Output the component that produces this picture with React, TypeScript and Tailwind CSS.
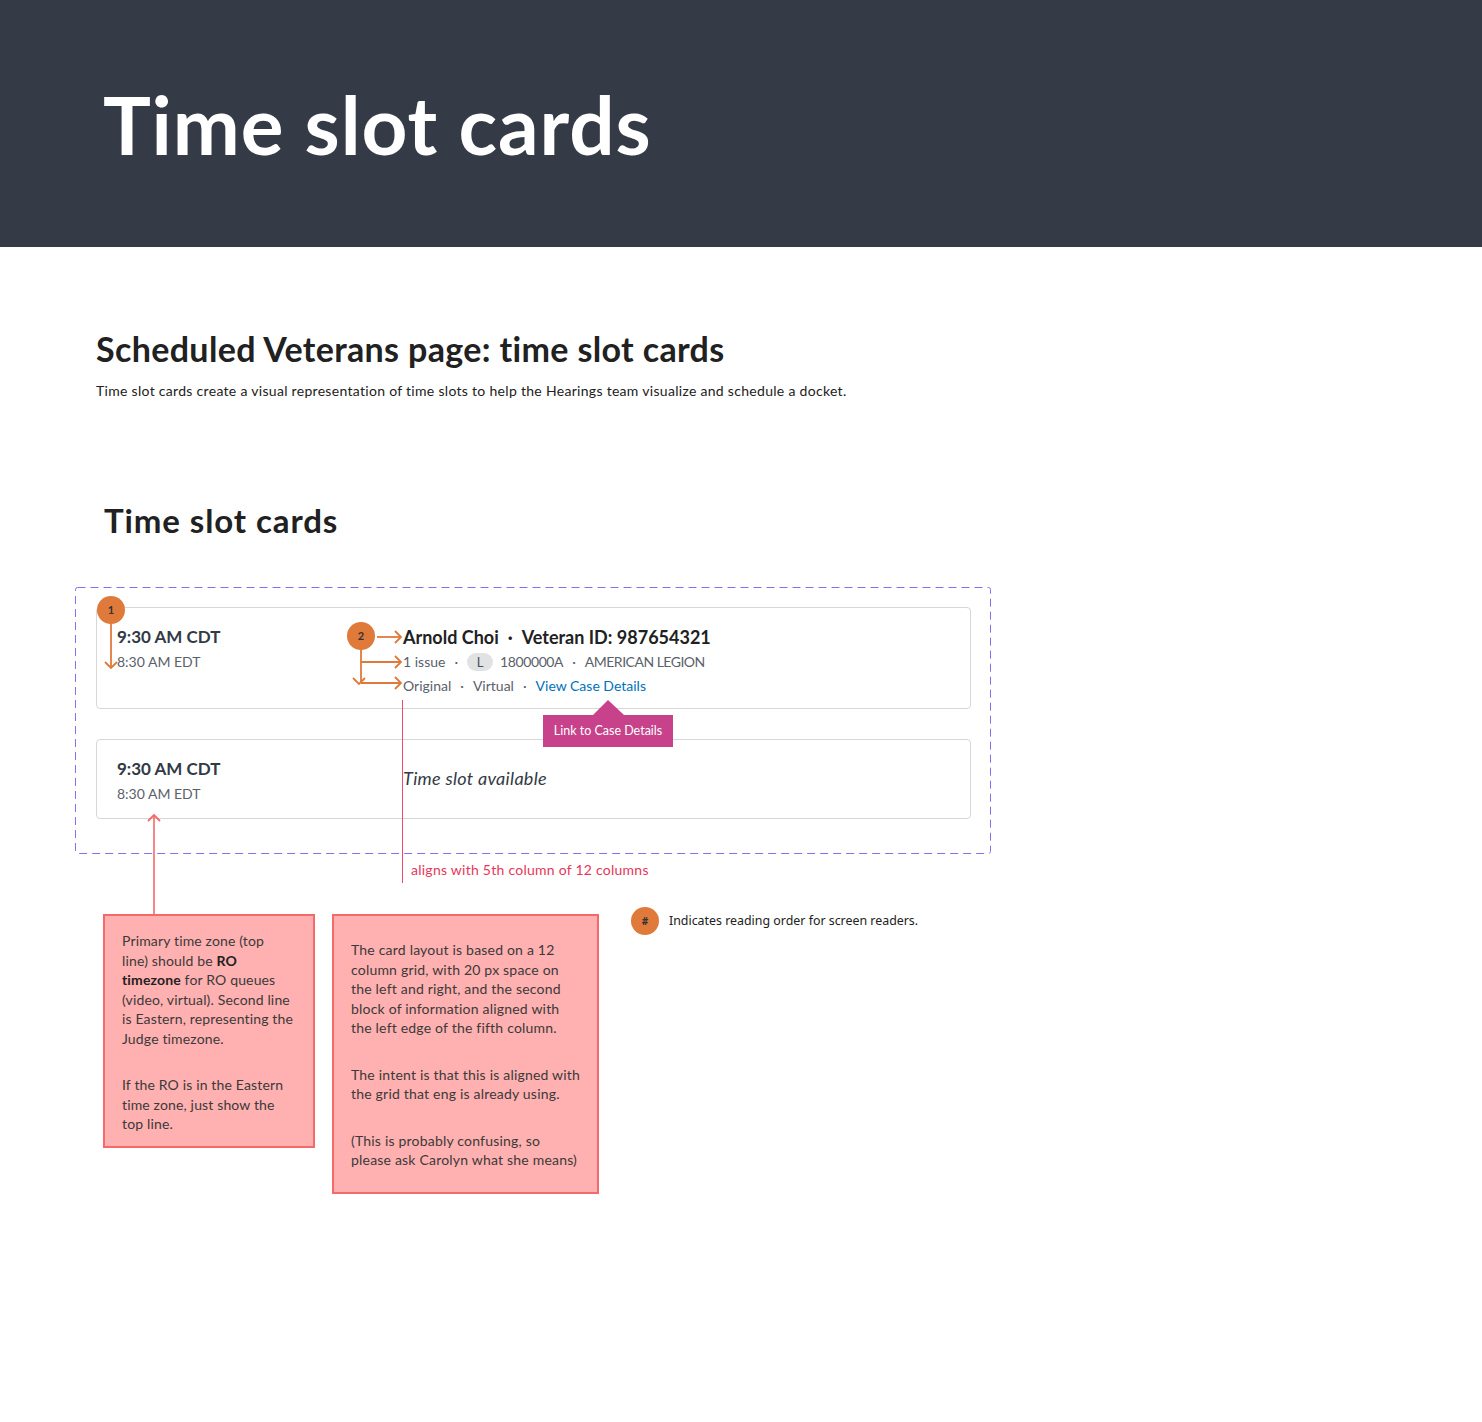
import React from "react";

const ORANGE = "#e07a3a";

function Dot() {
  return <span className="mx-[9px]">·</span>;
}

function Badge({ x, y, label }: { x: number; y: number; label: string }) {
  return (
    <g>
      <circle cx={x} cy={y} r={14} fill={ORANGE} />
      <text
        x={x}
        y={y + 4}
        textAnchor="middle"
        fontSize="11"
        fontWeight="700"
        fill="#333"
        fontFamily="Lato, sans-serif"
      >
        {label}
      </text>
    </g>
  );
}

function Head({ x, y, dir, color }: { x: number; y: number; dir: "right" | "down" | "up"; color: string }) {
  let pts = "";
  if (dir === "right") pts = `${x - 6},${y - 6} ${x},${y} ${x - 6},${y + 6}`;
  if (dir === "down") pts = `${x - 6},${y - 6} ${x},${y} ${x + 6},${y - 6}`;
  if (dir === "up") pts = `${x - 6},${y + 6} ${x},${y} ${x + 6},${y + 6}`;
  return <polyline points={pts} fill="none" stroke={color} strokeWidth={1.8} />;
}

function Overlay() {
  const o = ORANGE;
  const red = "#ef4b68";
  const pinkArrow = "#f46a6a";
  return (
    <svg className="absolute left-0 top-0 pointer-events-none" width={1482} height={1422}>
      {/* reading order 1 */}
      <line x1={111} y1={623} x2={111} y2={668} stroke={o} strokeWidth={1.8} />
      <Head x={111} y={668} dir="down" color={o} />
      <Badge x={111} y={610} label="1" />

      {/* reading order 2 */}
      <line x1={377} y1={637} x2={401} y2={637} stroke={o} strokeWidth={1.8} />
      <Head x={401} y={637} dir="right" color={o} />
      <line x1={361} y1={649} x2={361} y2={683} stroke={o} strokeWidth={1.8} />
      <line x1={361} y1={662} x2={401} y2={662} stroke={o} strokeWidth={1.8} />
      <Head x={401} y={662} dir="right" color={o} />
      <line x1={361} y1={683} x2={401} y2={683} stroke={o} strokeWidth={1.8} />
      <Head x={401} y={683} dir="right" color={o} />
      <Head x={359} y={684} dir="down" color={o} />
      <Badge x={361} y={636} label="2" />

      {/* column alignment line */}
      <line x1={402.5} y1={700} x2={402.5} y2={883} stroke={red} strokeWidth={1} />

      {/* timezone note arrow */}
      <line x1={154} y1={915} x2={154} y2={816} stroke={pinkArrow} strokeWidth={1.6} />
      <Head x={154} y={815} dir="up" color={pinkArrow} />

      {/* tooltip caret */}
      <polygon points="593,715 608,700 624,715" fill="#c7428a" />
    </svg>
  );
}

function TimeCol() {
  return (
    <div className="w-[286px] shrink-0">
      <div className="text-[17px] font-bold leading-[22px] text-[#323a45]">9:30 AM CDT</div>
      <div className="mt-[4px] text-[14px] leading-[20px] text-[#5b616b]">8:30 AM EDT</div>
    </div>
  );
}

export default function App() {
  return (
    <div
      className="relative min-h-[1422px] w-[1482px] bg-white text-[#212121]"
      style={{ fontFamily: "Lato, 'Noto Sans', sans-serif" }}
    >
      {/* Header */}
      <header className="flex h-[247px] items-center bg-[#343a46] pl-[103px]">
        <h1 className="text-[80px] font-bold leading-none tracking-[0.9px] text-white">Time slot cards</h1>
      </header>

      {/* Intro */}
      <section className="pl-[96px] pt-[82px]">
        <h2 className="text-[34px] font-bold leading-[40px] tracking-[0.35px] text-[#212121]">
          Scheduled Veterans page: time slot cards
        </h2>
        <p className="mt-[12px] text-[14px] leading-[20px] tracking-[0.3px] text-[#212121]">
          Time slot cards create a visual representation of time slots to help the Hearings team visualize and schedule a
          docket.
        </p>
      </section>

      <h3 className="pl-[104px] pt-[99px] text-[33px] font-bold leading-[40px] tracking-[0.9px] text-[#212121]">
        Time slot cards
      </h3>

      {/* Dashed frame with cards */}
      <div className="relative ml-[75px] mt-[47px] h-[267px] w-[916px] pl-[21px] pr-[20px] pt-[20px]">
        <svg className="absolute left-0 top-0 pointer-events-none" width="916" height="267">
          <rect
            x="0.5"
            y="0.5"
            width="915"
            height="266"
            fill="none"
            stroke="#8a6ef2"
            strokeWidth="1"
            strokeDasharray="8 5"
            rx="2"
          />
        </svg>

        <div className="flex h-[102px] rounded-[4px] border border-[#d6d7d9] bg-white pl-[20px] pt-[18px]">
          <TimeCol />
          <div>
            <div className="text-[18px] font-bold leading-[22px] text-[#212121]">
              Arnold Choi<Dot />Veteran ID: 987654321
            </div>
            <div className="mt-[4px] flex items-center text-[14px] leading-[20px] text-[#5b616b]">
              <span>1 issue</span>
              <Dot />
              <span className="mr-[7px] inline-flex h-[18px] w-[26px] items-center justify-center rounded-full bg-[#e1e2e3] text-[13px] text-[#4a4f57]">
                L
              </span>
              <span className="tracking-[-0.4px]">1800000A</span>
              <Dot />
              <span className="tracking-[-0.5px]">AMERICAN LEGION</span>
            </div>
            <div className="mt-[4px] flex items-center text-[14px] leading-[20px] text-[#5b616b]">
              <span>Original</span>
              <Dot />
              <span>Virtual</span>
              <Dot />
              <span className="text-[#0071bb]">View Case Details</span>
            </div>
          </div>
        </div>

        <div className="mt-[30px] flex h-[80px] items-center rounded-[4px] border border-[#d6d7d9] bg-white pl-[20px] pt-[4px]">
          <TimeCol />
          <div className="-mt-[6px] text-[18px] italic leading-[22px] tracking-[0.3px] text-[#323a45]">
            Time slot available
          </div>
        </div>
      </div>

      <div className="h-[60px] pl-[411px] pt-[6px] text-[14px] leading-[20px] tracking-[0.25px] text-[#e8365a]">
        aligns with 5th column of 12 columns
      </div>

      {/* Notes */}
      <div className="flex items-start pl-[103px]">
        <div className="w-[212px] border-2 border-[#f46a6a] bg-[#ffb0b0] px-[17px] pb-[12px] pt-[15px] text-[14px] leading-[19.5px] tracking-[0.15px] whitespace-nowrap text-[#3a3a3a]">
          <p>
            Primary time zone (top
            <br />
            line) should be <b className="text-[#212121]">RO</b>
            <br />
            <b className="text-[#212121]">timezone</b> for RO queues
            <br />
            (video, virtual). Second line
            <br />
            is Eastern, representing the
            <br />
            Judge timezone.
          </p>
          <p className="mt-[27px]">
            If the RO is in the Eastern
            <br />
            time zone, just show the
            <br />
            top line.
          </p>
        </div>

        <div className="ml-[17px] w-[267px] border-2 border-[#f46a6a] bg-[#ffb0b0] pb-[22px] pl-[17px] pr-[10px] pt-[24px] text-[14px] leading-[19.5px] tracking-[0.2px] whitespace-nowrap text-[#3a3a3a]">
          <p>
            The card layout is based on a 12
            <br />
            column grid, with 20 px space on
            <br />
            the left and right, and the second
            <br />
            block of information aligned with
            <br />
            the left edge of the fifth column.
          </p>
          <p className="mt-[27px]">
            The intent is that this is aligned with
            <br />
            the grid that eng is already using.
          </p>
          <p className="mt-[27px]">
            (This is probably confusing, so
            <br />
            please ask Carolyn what she means)
          </p>
        </div>

        <div className="ml-[32px] mt-[-7px] flex items-center gap-[10px]">
          <span
            className="flex h-[28px] w-[28px] items-center justify-center rounded-full bg-[#e07a3a] text-[10px] font-bold text-[#333]"
            style={{ fontFamily: "'Noto Sans', sans-serif" }}
          >
            #
          </span>
          <span className="text-[12.4px] text-[#212121]" style={{ fontFamily: "'Noto Sans', sans-serif" }}>
            Indicates reading order for screen readers.
          </span>
        </div>
      </div>

      {/* Tooltip */}
      <div className="absolute left-[543px] top-[715px] flex h-[32px] w-[130px] items-center justify-center bg-[#c7428a] text-[12.5px] text-white">
        Link to Case Details
      </div>

      <Overlay />
    </div>
  );
}
